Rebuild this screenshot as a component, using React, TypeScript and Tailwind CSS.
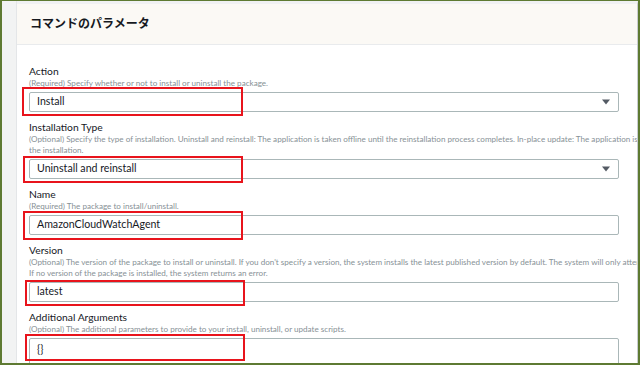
import React from "react";

type Row = {
  label: string;
  desc: string[];
  value: string;
  select?: boolean;
  area?: boolean;
  box: { l: number; t: number; w: number; h: number };
};

const rows: Row[] = [
  {
    label: "Action",
    desc: ["(Required) Specify whether or not to install or uninstall the package."],
    value: "Install",
    select: true,
    box: { l: -7, t: -5, w: 221, h: 29 },
  },
  {
    label: "Installation Type",
    desc: [
      "(Optional) Specify the type of installation. Uninstall and reinstall: The application is taken offline until the reinstallation process completes. In-place update: The application is available while new or updated files are added to",
      "the installation.",
    ],
    value: "Uninstall and reinstall",
    select: true,
    box: { l: -6, t: -3, w: 220, h: 27 },
  },
  {
    label: "Name",
    desc: ["(Required) The package to install/uninstall."],
    value: "AmazonCloudWatchAgent",
    box: { l: -6, t: -4, w: 220, h: 29 },
  },
  {
    label: "Version",
    desc: [
      "(Optional) The version of the package to install or uninstall. If you don't specify a version, the system installs the latest published version by default. The system will only attempt to uninstall the version that is currently installed.",
      "If no version of the package is installed, the system returns an error.",
    ],
    value: "latest",
    box: { l: -4, t: -2, w: 220, h: 26 },
  },
  {
    label: "Additional Arguments",
    desc: ["(Optional) The additional parameters to provide to your install, uninstall, or update scripts."],
    value: "{}",
    area: true,
    box: { l: -4, t: -4, w: 220, h: 27 },
  },
];

const Field = ({ row }: { row: Row }) => (
  <div className="mb-[9px]">
    <p className="text-[10.3px] leading-[12px] text-[#16191f]">{row.label}</p>
    {row.desc.map((d, i) => (
      <p
        key={i}
        className={`whitespace-nowrap text-[8.1px] leading-[11px] text-[#879196] ${i === 0 ? "mt-[1px]" : ""}`}
      >
        {d}
      </p>
    ))}
    <div className="relative mt-[3px]">
      <div
        className={`flex items-center justify-between rounded-[2px] border border-[#aab7b8] bg-white pl-[7px] pr-[8px] ${row.area ? "h-[40px] items-start pt-[3px]" : "h-[20px]"}`}
      >
        <span className="text-[10.6px] text-[#16191f]">{row.value}</span>
        {row.select && (
          <svg width="8" height="6" viewBox="0 0 8 6">
            <path d="M0 0.5 H8 L4 5.5 Z" fill="#545b64" />
          </svg>
        )}
      </div>
      <div
        className="pointer-events-none absolute border-2 border-[#e8141c]"
        style={{ left: row.box.l, top: row.box.t, width: row.box.w, height: row.box.h }}
      />
    </div>
  </div>
);

export default function App() {
  return (
    <div
      className="flex h-[365px] w-[640px] overflow-hidden border-b-2 border-l-2 border-r-2 border-t border-[#5e7a32] bg-white"
      style={{ fontFamily: "Lato, 'Noto Sans CJK JP', sans-serif" }}
    >
      <div className="w-[15px] shrink-0 border-r border-[#e4e6e8] bg-[#f2f3f3]" />
      <div className="flex min-w-0 flex-1 flex-col overflow-hidden border-r border-[#c9cdd1] border-t-[3px] border-t-[#f0f1f3]">
        <div className="flex h-[41px] shrink-0 items-center border-b border-[#e9ebed] bg-[#fbf9f5] pl-[13px]">
          <h2 className="text-[12px] font-bold text-[#16191f]">コマンドのパラメータ</h2>
        </div>
        <div className="pl-[12px] pr-[18px] pt-[20px]">
          {rows.map((r) => (
            <Field key={r.label} row={r} />
          ))}
        </div>
      </div>
    </div>
  );
}
